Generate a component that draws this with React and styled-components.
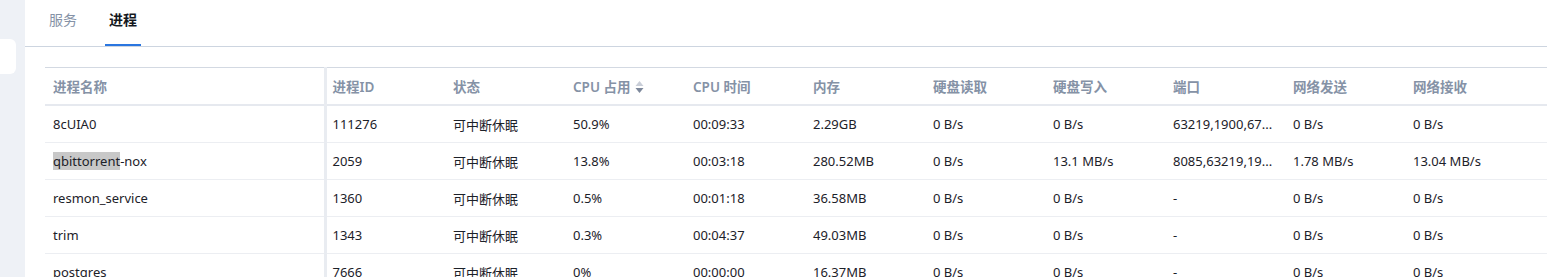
import React from "react";
import styled, { createGlobalStyle } from "styled-components";

const GlobalStyle = createGlobalStyle`
  html, body {
    margin: 0;
    padding: 0;
    background: #eef1f6;
    font-family: "Noto Sans", "Noto Sans CJK SC", sans-serif;
    overflow: hidden;
  }
`;

const columns = [
  { key: "name", label: "进程名称", width: 280 },
  { key: "pid", label: "进程ID", width: 120 },
  { key: "state", label: "状态", width: 120 },
  { key: "cpu", label: "CPU 占用", width: 120, sortable: true },
  { key: "time", label: "CPU 时间", width: 120 },
  { key: "mem", label: "内存", width: 120 },
  { key: "read", label: "硬盘读取", width: 120 },
  { key: "write", label: "硬盘写入", width: 120 },
  { key: "port", label: "端口", width: 120 },
  { key: "tx", label: "网络发送", width: 120 },
  { key: "rx", label: "网络接收", width: 142 },
];

const rows = [
  { name: "8cUIA0", pid: "111276", state: "可中断休眠", cpu: "50.9%", time: "00:09:33", mem: "2.29GB", read: "0 B/s", write: "0 B/s", port: "63219,1900,67...", tx: "0 B/s", rx: "0 B/s" },
  { name: "qbittorrent-nox", selected: "qbittorrent", pid: "2059", state: "可中断休眠", cpu: "13.8%", time: "00:03:18", mem: "280.52MB", read: "0 B/s", write: "13.1 MB/s", port: "8085,63219,19...", tx: "1.78 MB/s", rx: "13.04 MB/s" },
  { name: "resmon_service", pid: "1360", state: "可中断休眠", cpu: "0.5%", time: "00:01:18", mem: "36.58MB", read: "0 B/s", write: "0 B/s", port: "-", tx: "0 B/s", rx: "0 B/s" },
  { name: "trim", pid: "1343", state: "可中断休眠", cpu: "0.3%", time: "00:04:37", mem: "49.03MB", read: "0 B/s", write: "0 B/s", port: "-", tx: "0 B/s", rx: "0 B/s" },
  { name: "postgres", pid: "7666", state: "可中断休眠", cpu: "0%", time: "00:00:00", mem: "16.37MB", read: "0 B/s", write: "0 B/s", port: "-", tx: "0 B/s", rx: "0 B/s" },
];

export default function App() {
  return (
    <Page>
      <GlobalStyle />
      <Rail>
        <RailCard />
      </Rail>
      <Panel>
        <Tabs>
          <Tab>服务</Tab>
          <Tab $active>进程</Tab>
        </Tabs>
        <TableWrap>
          <Table>
            <colgroup>
              {columns.map((c) => (
                <col key={c.key} style={{ width: c.width }} />
              ))}
            </colgroup>
            <thead>
              <tr>
                {columns.map((c, i) => (
                  <Th key={c.key} $fixed={i === 0}>
                    {c.label}
                    {c.sortable && <SortIcon />}
                  </Th>
                ))}
              </tr>
            </thead>
            <tbody>
              {rows.map((r) => (
                <tr key={r.pid}>
                  {columns.map((c, i) => (
                    <Td key={c.key} $fixed={i === 0}>
                      {c.key === "name" && r.selected ? (
                        <>
                          <Selected>{r.selected}</Selected>
                          {r.name.slice(r.selected.length)}
                        </>
                      ) : (
                        r[c.key]
                      )}
                    </Td>
                  ))}
                </tr>
              ))}
            </tbody>
          </Table>
        </TableWrap>
      </Panel>
    </Page>
  );
}

function SortIcon() {
  return (
    <SortSvg width="9" height="14" viewBox="0 0 9 14">
      <path d="M4.5 1 L8.5 6 L0.5 6 Z" fill="#c9ced8" />
      <path d="M4.5 13 L8.5 8 L0.5 8 Z" fill="#7d889b" />
    </SortSvg>
  );
}

const Page = styled.div`
  display: flex;
  width: 1547px;
  height: 277px;
  overflow: hidden;
  background: #eef1f6;
`;

const Rail = styled.div`
  width: 25px;
  flex-shrink: 0;
  padding-top: 39px;
`;

const RailCard = styled.div`
  width: 16px;
  height: 35px;
  background: #ffffff;
  border-radius: 0 6px 6px 0;
`;

const Panel = styled.div`
  flex: 1;
  background: #ffffff;
  min-width: 0;
`;

const Tabs = styled.div`
  display: flex;
  gap: 24px;
  height: 46px;
  padding-left: 20px;
  border-bottom: 1px solid #cdd5e0;
`;

const Tab = styled.div`
  position: relative;
  padding: 0 4px;
  font-size: 14px;
  line-height: 40px;
  color: ${(p) => (p.$active ? "#15181e" : "#8592a6")};
  font-weight: ${(p) => (p.$active ? 600 : 400)};

  &::after {
    content: "";
    display: ${(p) => (p.$active ? "block" : "none")};
    position: absolute;
    left: 0;
    right: 0;
    bottom: 0;
    height: 2px;
    background: #2a76e0;
  }
`;

const TableWrap = styled.div`
  padding: 20px 0 0 20px;
`;

const Table = styled.table`
  border-collapse: collapse;
  table-layout: fixed;
  width: 1502px;
  border-top: 1px solid #d3d9e2;
`;

const Th = styled.th`
  height: 36px;
  padding: 0 8px;
  text-align: left;
  font-size: 13.5px;
  font-weight: 600;
  color: #8592a6;
  white-space: nowrap;
  border-bottom: 2px solid #e6e9ef;
  border-right: ${(p) => (p.$fixed ? "3px solid #e9ecf1" : "none")};

  &:nth-child(2) {
    padding-left: 6px;
  }
`;

const Td = styled.td`
  height: 36px;
  padding: 0 8px;
  font-size: 13px;
  color: #1c2129;
  white-space: nowrap;
  overflow: hidden;
  border-bottom: 1px solid #eceef2;
  border-right: ${(p) => (p.$fixed ? "3px solid #e9ecf1" : "none")};

  &:nth-child(2) {
    padding-left: 6px;
  }
`;

const Selected = styled.span`
  background: #c8c8c8;
`;

const SortSvg = styled.svg`
  margin-left: 4px;
  vertical-align: -2px;
`;
